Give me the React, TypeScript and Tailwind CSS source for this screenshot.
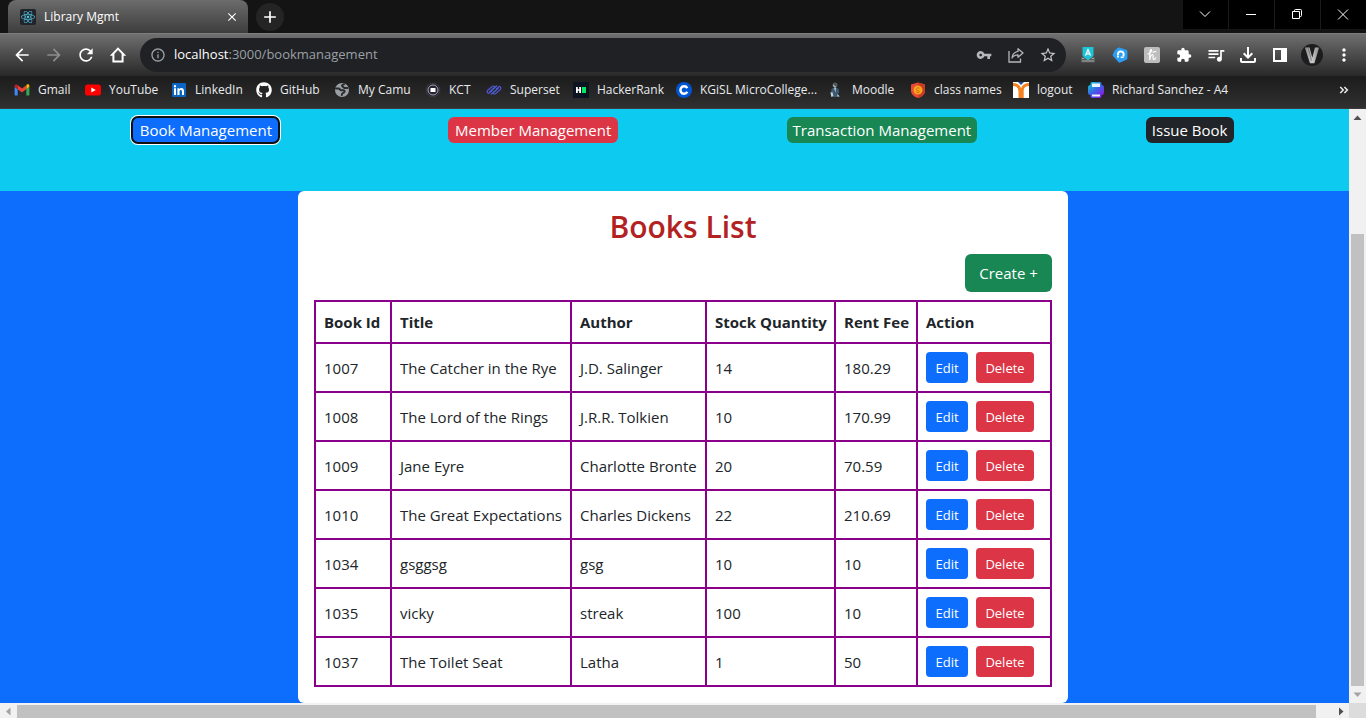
import type { ReactNode } from "react";
import {
  MdAdd,
  MdArrowBack,
  MdArrowForward,
  MdClose,
  MdExtension,
  MdInfoOutline,
  MdMoreVert,
  MdOutlineFileDownload,
  MdQueueMusic,
  MdRefresh,
  MdStarBorder,
  MdVpnKey,
} from "react-icons/md";
import { FaGithub, FaReact } from "react-icons/fa";

type Book = {
  id: number;
  title: string;
  author: string;
  stock: number;
  fee: string;
};

const books: Book[] = [
  { id: 1007, title: "The Catcher in the Rye", author: "J.D. Salinger", stock: 14, fee: "180.29" },
  { id: 1008, title: "The Lord of the Rings", author: "J.R.R. Tolkien", stock: 10, fee: "170.99" },
  { id: 1009, title: "Jane Eyre", author: "Charlotte Bronte", stock: 20, fee: "70.59" },
  { id: 1010, title: "The Great Expectations", author: "Charles Dickens", stock: 22, fee: "210.69" },
  { id: 1034, title: "gsggsg", author: "gsg", stock: 10, fee: "10" },
  { id: 1035, title: "vicky", author: "streak", stock: 100, fee: "10" },
  { id: 1037, title: "The Toilet Seat", author: "Latha", stock: 1, fee: "50" },
];

function Glyph({ children, size = 16 }: { children: ReactNode; size?: number }) {
  return (
    <svg width={size} height={size} viewBox="0 0 16 16" fill="none" className="shrink-0" aria-hidden="true">
      {children}
    </svg>
  );
}

const HomeIcon = () => (
  <Glyph>
    <path d="M8 1.600L14 7.800H12.600V14.500H3.400V7.800H2z" stroke="#fff" strokeWidth="2" />
  </Glyph>
);

const GmailIcon = () => (
  <Glyph>
    <path d="M1 13.6h2.7V7.2L.6 4.8v8c0 .4.2.8.4.8z" fill="#4285f4" />
    <path d="M12.3 13.6h2.1c.6 0 1-.4 1-1V4.8l-3.1 2.4z" fill="#34a853" />
    <path d="M12.3 3.2v4l3.1-2.4V4c0-1.6-1.700-2.200-2.800-1.300z" fill="#fbbc04" />
    <path d="M3.700 7.200v-4L8 6.400l4.300-3.200v4L8 10.500z" fill="#ea4335" />
    <path d="M.6 4v.8l3.100 2.400v-4l-.4-.4C2.200 2 .6 2.600.6 4z" fill="#c5221f" />
  </Glyph>
);

const YouTubeIcon = () => (
  <Glyph>
    <rect y="2.500" width="16" height="11" rx="2.800" fill="#f00" />
    <path d="M6.300 5.500v5L10.800 8z" fill="#fff" />
  </Glyph>
);

const LinkedInIcon = () => (
  <Glyph>
    <rect x="1" y="1" width="14" height="14" rx="1" fill="#0a66c2" />
    <path
      d="M3 6.300h2V13H3zM4 3a1.200 1.200 0 110 2.400A1.200 1.200 0 014 3zM6.400 6.300h2v.9c.4-.7 1.100-1.100 2-1.100 2 0 2.600 1.300 2.600 3.200V13h-2V9.600c0-.9-.2-1.700-1.100-1.700-1 0-1.400.7-1.400 1.700V13H6.400z"
      fill="#fff"
    />
  </Glyph>
);

const GlobeIcon = () => (
  <Glyph>
    <circle cx="8" cy="8" r="7" fill="#9aa0a6" />
    <path
      d="M2 6.500h2.500c1.500 0 1.300 1.700 2.800 1.700h2.200c1.200 0 1.500 1.500.5 2.300-.8.700-2.200.5-2.200 2.500M10 2.200c-2 .6-2.600 1.600-1.300 2.400 1 .7 1.500 1.700 3 1.500h1.800"
      stroke="#2c2c2c"
      strokeWidth="2"
      strokeLinecap="round"
    />
  </Glyph>
);

const KctIcon = () => (
  <Glyph>
    <circle cx="8" cy="8" r="6.800" fill="#252531" stroke="#51515f" strokeWidth="1" strokeDasharray="1 .7" />
    <circle cx="8" cy="8" r="5" stroke="#a2a2b0" strokeWidth="1" />
    <rect x="5.500" y="6" width="5" height="4" rx=".5" fill="#fff" />
  </Glyph>
);

const SupersetIcon = () => (
  <Glyph>
    <g strokeWidth="1.200" strokeLinecap="round" stroke="#5751dc">
      <path d="M5.500 9.200L2.700 11.400C.8 10.900.8 9 2 8l4.600-3.700c1.300-.7 2.400.3 1.900 1.500L3.600 10" />
      <path d="M10.500 6.600l2.800-2.200c1.900.5 1.900 2.500.7 3.500l-4.600 3.900c-1.300.8-2.400-.2-1.900-1.500l4.900-4.200" />
      <path d="M5.300 12.200l5.600-4.800M5.100 8.700l5.600-4.900" stroke="#426ac9" />
    </g>
  </Glyph>
);

const HackerRankIcon = () => (
  <Glyph>
    <rect width="16" height="16" fill="#0b1420" />
    <path d="M3 5h1.800v2.200h1.400V5H8v6H6.200V8.800H4.800V11H3z" fill="#fff" />
    <path d="M9 5h4v6H9z" fill="#00ea64" />
  </Glyph>
);

const CourseraIcon = () => (
  <Glyph>
    <circle cx="8" cy="8" r="8" fill="#0056d2" />
    <path d="M11.300 6.100A3.700 3.700 0 108 11.700c1.500 0 2.700-.7 3.300-1.900" stroke="#fff" strokeWidth="2.500" />
  </Glyph>
);

const MoodleIcon = () => (
  <Glyph>
    <circle cx="7" cy="3" r="2.300" fill="#a9b2b8" />
    <path d="M4.800 2.200C5 .4 8.800.2 9.300 2.400L8.500 5z" fill="#4a555e" />
    <path d="M3.500 7l2.300-1.600h2.400L10.700 7l.5 4-1.500.4.800 3.600h-6L5 10.600l-2 .1z" fill="#3f5a70" />
    <path d="M6 5.500l1.400 5L8 5.400zM2.400 10.500l2.200-.3.800 3.700-2 1.100zM9.400 12l2.400 2.600H9.300z" fill="#c1d2dd" />
  </Glyph>
);

const ShieldIcon = () => (
  <Glyph>
    <path d="M8 .4l7 2.100v6.300C15 12.500 11.600 15 8 16 4.400 15 1 12.500 1 8.800V2.500z" fill="#e84a35" />
    <path d="M8 .4l7 2.100v6.300C15 12.500 11.600 15 8 16z" fill="#c93a27" />
    <circle cx="8" cy="8" r="4.500" fill="#f9a51a" />
    <path d="M9.600 6.200c-1.700-1-3.400.1-3.200 1.400.3 1.500 3 .6 2.900 2-.1 1.300-2.200 1.200-3 .3" stroke="#d56713" strokeWidth="1" />
  </Glyph>
);

const LogoutIcon = () => (
  <Glyph>
    <rect width="16" height="16" fill="#fff" />
    <path d="M5 0h6L8 3z" fill="#28489b" />
    <path d="M0 2.500c4.600.1 7 2.500 7 7V16M16 2.500c-4 .1-6.300 2.300-6.800 5.200V16" stroke="#f58220" strokeWidth="3" />
  </Glyph>
);

const ResumeIcon = () => (
  <Glyph>
    <defs>
      <linearGradient id="resume" x1="2" y1="1" x2="13" y2="15" gradientUnits="userSpaceOnUse">
        <stop stopColor="#10c5cf" />
        <stop offset=".5" stopColor="#3c63e8" />
        <stop offset="1" stopColor="#8a18e8" />
      </linearGradient>
    </defs>
    <path
      d="M4 0h8a1.500 1.500 0 011.500 1.500V3A2.500 2.500 0 0116 5.500v5a2.500 2.500 0 01-2.500 2.500v1.500A1.500 1.500 0 0112 16H4a1.500 1.500 0 01-1.500-1.500V13A2.500 2.500 0 010 10.500v-5A2.500 2.500 0 012.500 3V1.500A1.500 1.500 0 014 0z"
      fill="url(#resume)"
    />
    <path d="M4 1.500h8V5H4zM4 12.500h8v2H4z" fill="#e8f5ff" />
  </Glyph>
);

const ShareIcon = () => (
  <Glyph>
    <path d="M1 4v11h11.500v-3.500" stroke="#b4b6b9" strokeWidth="1.300" />
    <path d="M10 1.700L15 6l-5 4.300V7.800c-3 0-4.800 1-6 3.200.3-3.600 2.300-6 6-6.700z" stroke="#b4b6b9" strokeWidth="1.300" strokeLinejoin="round" />
  </Glyph>
);

const TypingIcon = () => (
  <Glyph>
    <path d="M1 10h14v5.500H1z" fill="#5d5d5d" />
    <path d="M2 11.500h2m8 0h2M2 14h12" stroke="#a5a5a5" strokeWidth="1.200" />
    <path d="M2.500 0h11v9L8 13.500 2.500 9z" fill="#1fc3d6" />
    <path d="M5.500 8.500L8 2.500l2.500 6M6.500 6.800h3" stroke="#fff" strokeWidth="1.200" />
  </Glyph>
);

const PentagonIcon = () => (
  <Glyph>
    <path
      d="M5.600 1Q6.500.2 7.600.5l6.600 2.200q1.200.4 1.200 1.600v6.900q0 1.100-1 1.500l-6.200 2.800q-1 .4-1.800-.4L1.200 9.300q-.8-.9-.4-1.900l1.900-3.900z"
      fill="#2a9df4"
    />
    <path d="M6.400 8.500C5 6.300 6.700 4.400 9 4.600c2.300.2 3.300 2 2.300 4.800" stroke="#fff" strokeWidth="2" />
    <path d="M8.700 10.200h3M5 9.700h2" stroke="#fff" strokeWidth="1.600" />
  </Glyph>
);

const HoneyIcon = () => (
  <Glyph>
    <rect width="16" height="16" rx="2" fill="#bdbdbd" />
    <path
      d="M4 7c2.500-.6 4.300-3.700 3.200-4.400-1.200-.5-1.600 4-1.500 10 .6-3 1.800-5.300 3-5.100 1.300.3-.5 4.500.8 5 .9.200 1.700-.7 2.200-1.700M9 5.200l2.800-.7"
      stroke="#fff"
      strokeWidth="1.200"
      strokeLinecap="round"
      strokeLinejoin="round"
    />
  </Glyph>
);

const SidePanelIcon = () => (
  <Glyph>
    <path d="M1 1h14v14H1zm2 2v10h6V3z" fill="#fff" fillRule="evenodd" />
  </Glyph>
);

const AvatarIcon = () => (
  <Glyph size={22}>
    <defs>
      <linearGradient id="avatar" x1="3" x2="13" y1="0" y2="0" gradientUnits="userSpaceOnUse">
        <stop stopColor="#888" />
        <stop offset=".5" stopColor="#ccc" />
        <stop offset="1" stopColor="#888" />
      </linearGradient>
    </defs>
    <circle cx="8" cy="8" r="8" fill="#1d1d1f" />
    <path d="M2.800 2.500h3.400l2 7.500 2-7.500h3L9.800 14H6.500z" fill="url(#avatar)" />
    <path d="M5.300 3l2.300 9" stroke="#555" strokeWidth=".5" />
  </Glyph>
);

const bookmarks: { label: string; icon: ReactNode }[] = [
  { label: "Gmail", icon: <GmailIcon /> },
  { label: "YouTube", icon: <YouTubeIcon /> },
  { label: "LinkedIn", icon: <LinkedInIcon /> },
  { label: "GitHub", icon: <FaGithub className="size-4 shrink-0 text-white" /> },
  { label: "My Camu", icon: <GlobeIcon /> },
  { label: "KCT", icon: <KctIcon /> },
  { label: "Superset", icon: <SupersetIcon /> },
  { label: "HackerRank", icon: <HackerRankIcon /> },
  { label: "KGiSL MicroCollege...", icon: <CourseraIcon /> },
  { label: "Moodle", icon: <MoodleIcon /> },
  { label: "class names", icon: <ShieldIcon /> },
  { label: "logout", icon: <LogoutIcon /> },
  { label: "Richard Sanchez - A4", icon: <ResumeIcon /> },
];

const windowControls: { label: string; path: string }[] = [
  { label: "Search tabs", path: "M3 5.500l5 5 5-5" },
  { label: "Minimize", path: "M3 8.500h10" },
  { label: "Restore", path: "M3.500 5.500h7v7h-7zM5.500 5.500V4.500q0-1 1-1h5q1 0 1 1v5q0 1-1 1h-1" },
  { label: "Close", path: "M3 3.500l10 10M13 3.500l-10 10" },
];

function IconButton({ label, children }: { label: string; children: ReactNode }) {
  return (
    <button type="button" aria-label={label} className="flex size-8 shrink-0 items-center justify-center text-white">
      {children}
    </button>
  );
}

function TabStrip() {
  return (
    <div className="flex h-[33px] items-start bg-[#141414] pl-2">
      <div className="flex h-[33px] w-60 items-center gap-2 rounded-t-lg bg-linear-to-b from-[#6c6c6c] to-[#3d3d3d] pr-2 pl-3">
        <span className="flex size-4 items-center justify-center rounded-xs bg-[#20232a]">
          <FaReact className="size-3.5 text-[#53c1de]" />
        </span>
        <span className="flex-1 text-xs text-white">Library Mgmt</span>
        <button type="button" aria-label="Close tab" className="flex size-4 items-center justify-center text-white">
          <MdClose className="size-3.5" />
        </button>
      </div>
      <button
        type="button"
        aria-label="New tab"
        className="mt-[3px] ml-2 flex size-7 items-center justify-center rounded-full bg-[#242424] text-white"
      >
        <MdAdd className="size-5" />
      </button>
      <div className="ml-auto flex gap-px bg-[#1b1b1b]">
        {windowControls.map((c) => (
          <button
            key={c.label}
            type="button"
            aria-label={c.label}
            className="flex h-[29px] w-[45px] items-center justify-center bg-black pr-px pb-px"
          >
            <Glyph>
              <path d={c.path} stroke="#fff" strokeWidth="1" />
            </Glyph>
          </button>
        ))}
      </div>
    </div>
  );
}

function Toolbar() {
  return (
    <div className="flex h-[43px] items-center border-t border-[#7d7d7d] bg-linear-to-b from-[#707070] to-[#292929] px-1.5">
      <IconButton label="Back">
        <MdArrowBack className="size-5" />
      </IconButton>
      <IconButton label="Forward">
        <MdArrowForward className="size-5 text-[#8d8d8d]" />
      </IconButton>
      <IconButton label="Reload">
        <MdRefresh className="size-5" />
      </IconButton>
      <IconButton label="Home">
        <HomeIcon />
      </IconButton>
      <div className="mx-1.5 flex h-[34px] flex-1 items-center rounded-full bg-[#202124] pr-0.5 pl-2.5">
        <MdInfoOutline className="mr-2 size-4 text-[#9aa0a6]" />
        <div className="flex-1 text-[13px] text-[#9aa0a6]">
          <span className="text-white">localhost</span>:3000/bookmanagement
        </div>
        <IconButton label="Passwords">
          <MdVpnKey className="size-4 text-[#b4b6b9]" />
        </IconButton>
        <IconButton label="Share">
          <ShareIcon />
        </IconButton>
        <IconButton label="Bookmark">
          <MdStarBorder className="size-[18px] text-[#c4c6c9]" />
        </IconButton>
      </div>
      <IconButton label="Typing extension">
        <TypingIcon />
      </IconButton>
      <IconButton label="Tag extension">
        <PentagonIcon />
      </IconButton>
      <IconButton label="Coupons extension">
        <HoneyIcon />
      </IconButton>
      <IconButton label="Extensions">
        <MdExtension className="size-4" />
      </IconButton>
      <IconButton label="Media">
        <MdQueueMusic className="size-5" />
      </IconButton>
      <IconButton label="Downloads">
        <MdOutlineFileDownload className="size-6" />
      </IconButton>
      <IconButton label="Side panel">
        <SidePanelIcon />
      </IconButton>
      <IconButton label="Profile">
        <AvatarIcon />
      </IconButton>
      <IconButton label="Menu">
        <MdMoreVert className="size-5" />
      </IconButton>
    </div>
  );
}

function BookmarksBar() {
  return (
    <div className="flex h-[33px] items-center justify-between border-b border-[#3c3c3c] bg-linear-to-b from-[#1c1c1c] to-[#303030] pr-4 pb-1 pl-3.5 text-xs text-[#e8eaed]">
      <nav className="grid grid-cols-[71px_86px_85px_78px_91px_61px_87px_103px_152px_82px_103px_75px_auto]">
        {bookmarks.map((b) => (
          <a key={b.label} href="#" className="flex items-center gap-2 whitespace-nowrap">
            {b.icon}
            {b.label}
          </a>
        ))}
      </nav>
      <button type="button" aria-label="More bookmarks">
        <Glyph size={12}>
          <path d="M3 4l4 4-4 4M8.500 4l4 4-4 4" stroke="#e8eaed" strokeWidth="2" />
        </Glyph>
      </button>
    </div>
  );
}

function BooksTable() {
  const cell = "border-2 border-[#8b008b] px-2";
  return (
    <table className="w-full table-fixed border-collapse text-left text-[15px] leading-6 text-[#212529]">
      <colgroup>
        <col className="w-[76px]" />
        <col className="w-[180px]" />
        <col className="w-[135px]" />
        <col className="w-[129px]" />
        <col className="w-[82px]" />
        <col />
      </colgroup>
      <thead>
        <tr className="h-[42px] whitespace-nowrap">
          <th className={cell}>Book Id</th>
          <th className={cell}>Title</th>
          <th className={cell}>Author</th>
          <th className={cell}>Stock Quantity</th>
          <th className={cell}>Rent Fee</th>
          <th className={cell}>Action</th>
        </tr>
      </thead>
      <tbody>
        {books.map((b) => (
          <tr key={b.id} className="h-[49px] whitespace-nowrap">
            <td className={cell}>{b.id}</td>
            <td className={cell}>{b.title}</td>
            <td className={cell}>{b.author}</td>
            <td className={cell}>{b.stock}</td>
            <td className={cell}>{b.fee}</td>
            <td className={cell}>
              <div className="flex gap-2 text-[13px] text-white">
                <button type="button" className="h-[31px] w-[42px] rounded-sm bg-[#0d6efd]">
                  Edit
                </button>
                <button type="button" className="h-[31px] w-[58px] rounded-sm bg-[#dc3545]">
                  Delete
                </button>
              </div>
            </td>
          </tr>
        ))}
      </tbody>
    </table>
  );
}

function LibraryPage() {
  return (
    <div className="flex w-screen shrink-0 flex-col">
      <nav className="flex h-[82px] shrink-0 items-start justify-around bg-[#0dcaf0] px-12 pt-2 text-[15px] leading-[26px] text-white">
        <a
          href="#"
          className="w-[147px] rounded-md bg-[#0d6efd] text-center ring-2 ring-white outline-2 -outline-offset-1 outline-[#101010]"
        >
          Book Management
        </a>
        <a href="#" className="w-[170px] rounded-md bg-[#dc3545] text-center">
          Member Management
        </a>
        <a href="#" className="w-[190px] rounded-md bg-[#198754] text-center">
          Transaction Management
        </a>
        <a href="#" className="w-[88px] rounded-md bg-[#212529] text-center">
          Issue Book
        </a>
      </nav>
      <main className="flex flex-1 items-start justify-center bg-[#0d6efd]">
        <section className="w-[770px] rounded-md bg-white p-4">
          <h2 className="mb-2 text-center text-[30px] leading-[39px] font-semibold text-[#b22222]">Books List</h2>
          <div className="mb-2 flex justify-end">
            <button type="button" className="h-[38px] w-[87px] rounded-md bg-[#198754] text-[15px] text-white">
              Create +
            </button>
          </div>
          <BooksTable />
        </section>
      </main>
    </div>
  );
}

function Arrow({ d, color }: { d: string; color: string }) {
  return (
    <svg width="17" height="17" viewBox="0 0 17 17" className="shrink-0" aria-hidden="true">
      <path d={d} fill={color} />
    </svg>
  );
}

export default function App() {
  return (
    <div className="flex h-screen flex-col overflow-hidden font-['Open_Sans','Noto_Sans',sans-serif]">
      <header className="shrink-0">
        <TabStrip />
        <Toolbar />
        <BookmarksBar />
      </header>
      <div className="flex min-h-0 flex-1">
        <div className="flex min-w-0 flex-1 overflow-hidden">
          <LibraryPage />
        </div>
        <div className="flex w-[17px] shrink-0 flex-col bg-[#f1f1f1]">
          <Arrow d="M4.500 11h8l-4-4.500z" color="#505050" />
          <div className="flex-[108]" />
          <div className="mx-0.5 flex-[452] bg-[#c1c1c1]" />
          <Arrow d="M4.500 6.500h8l-4 4.500z" color="#a3a3a3" />
        </div>
      </div>
      <div className="flex h-[15px] shrink-0 bg-[#f1f1f1]">
        <Arrow d="M10.500 4.500v8L6 8.500z" color="#a3a3a3" />
        <div className="mt-0.5 flex-1 bg-[#c1c1c1]" />
        <div className="w-4" />
        <Arrow d="M7 4.500v8l4.500-4z" color="#505050" />
        <div className="w-[17px] bg-[#dcdcdc]" />
      </div>
    </div>
  );
}
